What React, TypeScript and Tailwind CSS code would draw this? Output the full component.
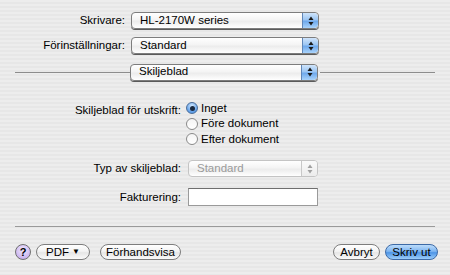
import React from "react";

const font = "font-['Liberation_Sans',Arial,sans-serif]";

const Stepper = ({ disabled }: { disabled?: boolean }) => (
  <div
    className={
      disabled
        ? "flex h-full w-[16px] items-center justify-center border-l border-[#c8c8c8] bg-[linear-gradient(#fafafa,#ececec)]"
        : "flex h-full w-[16px] items-center justify-center rounded-r-[4px] border-l border-[#5f86b8] bg-[linear-gradient(#cfe4fb_0%,#9cc6f3_45%,#6fa9ec_55%,#a9d3fb_100%)]"
    }
  >
    <svg width="6" height="10" viewBox="0 0 6 10">
      <path d="M3 0.5 L5.5 4 H0.5 Z" fill={disabled ? "#a0a0a0" : "#1a1a1a"} />
      <path d="M3 9.5 L5.5 6 H0.5 Z" fill={disabled ? "#a0a0a0" : "#1a1a1a"} />
    </svg>
  </div>
);

const Popup = ({ value, width, disabled }: { value: string; width: string; disabled?: boolean }) => (
  <div
    className={`flex h-[17px] ${width} items-center overflow-hidden rounded-[4px] border ${
      disabled ? "border-[#c4c4c4] text-[#9a9a9a]" : "border-[#7d7d7d] text-black shadow-[0_1px_0_#5a5a5a]"
    } bg-[linear-gradient(#ffffff_0%,#f4f4f4_45%,#ececec_55%,#ffffff_100%)]`}
  >
    <span className="flex-1 pl-[8px] leading-none">{value}</span>
    <Stepper disabled={disabled} />
  </div>
);

const Radio = ({ checked, label }: { checked?: boolean; label: string }) => (
  <div className="flex h-[15.5px] items-center gap-[3px]">
    <div
      className={`flex h-[12px] w-[12px] items-center justify-center rounded-full border ${
        checked
          ? "border-[#4a6d99] bg-[radial-gradient(circle_at_50%_30%,#d6ebff,#5e9ee8_70%)]"
          : "border-[#8a8a8a] bg-[linear-gradient(#f4f4f4,#ffffff)]"
      }`}
    >
      {checked && <div className="h-[5px] w-[5px] rounded-full bg-[#1a2a40]" />}
    </div>
    <span>{label}</span>
  </div>
);

const PillButton = ({ children, width, blue }: { children: React.ReactNode; width: string; blue?: boolean }) => (
  <div
    className={`flex h-[16px] ${width} items-center justify-center rounded-full border ${
      blue
        ? "border-[#3d6aa6] bg-[linear-gradient(#bcdcfb_0%,#7fb6f1_45%,#4e95e6_55%,#9ccdfa_100%)]"
        : "border-[#7d7d7d] bg-[linear-gradient(#ffffff_0%,#f3f3f3_45%,#e6e6e6_55%,#fafafa_100%)]"
    } leading-none text-black`}
  >
    {children}
  </div>
);

export default function App() {
  return (
    <div
      className={`${font} h-[275px] w-[450px] overflow-hidden bg-[repeating-linear-gradient(180deg,#ededed_0px,#ededed_2px,#e7e7e7_2px,#e7e7e7_4px)] text-[11.5px] text-black`}
    >
      <div className="flex flex-col pt-[12px]">
        <div className="flex items-center">
          <span className="w-[125px] text-right">Skrivare:</span>
          <div className="ml-[6px]">
            <Popup value="HL-2170W series" width="w-[188px]" />
          </div>
        </div>
        <div className="mt-[8px] flex items-center">
          <span className="w-[125px] text-right">Förinställningar:</span>
          <div className="ml-[6px]">
            <Popup value="Standard" width="w-[188px]" />
          </div>
        </div>
        <div className="mt-[9px] flex items-center px-[15px]">
          <div className="h-px flex-1 bg-[#8c8c8c]" />
          <Popup value="Skiljeblad" width="w-[188px]" />
          <div className="ml-[2px] h-px flex-1 bg-[#8c8c8c]" />
        </div>
      </div>

      <div className="mt-[20px] flex">
        <span className="mt-[1px] w-[181px] text-right">Skiljeblad för utskrift:</span>
        <div className="ml-[5px] flex flex-col">
          <Radio checked label="Inget" />
          <Radio label="Före dokument" />
          <Radio label="Efter dokument" />
        </div>
      </div>

      <div className="mt-[13px] flex items-center">
        <span className="w-[181px] text-right">Typ av skiljeblad:</span>
        <div className="ml-[7px]">
          <Popup value="Standard" width="w-[130px]" disabled />
        </div>
      </div>

      <div className="mt-[11px] flex items-center">
        <span className="w-[181px] text-right">Fakturering:</span>
        <div className="ml-[7px] h-[18px] w-[130px] border border-[#9a9a9a] border-t-[#6f6f6f] bg-white" />
      </div>

      <div className="mx-[15px] mt-[20px] h-px bg-[#9a9a9a]" />

      <div className="mt-[17px] flex items-center px-[15px]">
        <div className="flex h-[16px] w-[16px] items-center justify-center rounded-full border border-[#6f6f6f] bg-[radial-gradient(circle_at_50%_35%,#f1e8ff,#c9b3ee_75%)] text-[11px] font-bold leading-none">
          ?
        </div>
        <div className="ml-[5px]">
          <PillButton width="w-[54px]">
            PDF <span className="ml-[3px] text-[8px]">▼</span>
          </PillButton>
        </div>
        <div className="ml-[10px]">
          <PillButton width="w-[81px]">Förhandsvisa</PillButton>
        </div>
        <div className="flex-1" />
        <PillButton width="w-[47px]">Avbryt</PillButton>
        <div className="ml-[5px] mr-[-3px]">
          <PillButton width="w-[53px]" blue>
            Skriv ut
          </PillButton>
        </div>
      </div>
    </div>
  );
}
